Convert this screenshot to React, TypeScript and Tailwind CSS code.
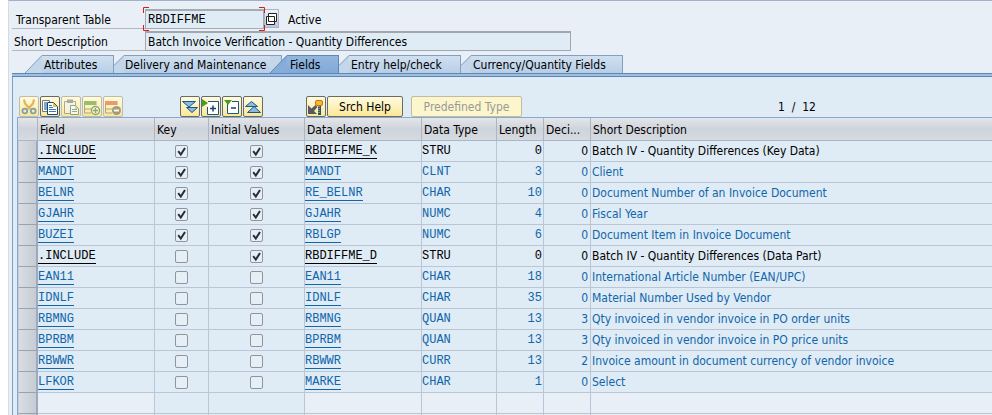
import React from "react";

type Row = { field: string; key: boolean; init: boolean; elem: string; type: string; len: number; dec: number; desc: string; black?: boolean };

const rows: Row[] = [
  { field: ".INCLUDE", key: true, init: true, elem: "RBDIFFME_K", type: "STRU", len: 0, dec: 0, desc: "Batch IV - Quantity Differences (Key Data)", black: true },
  { field: "MANDT", key: true, init: true, elem: "MANDT", type: "CLNT", len: 3, dec: 0, desc: "Client" },
  { field: "BELNR", key: true, init: true, elem: "RE_BELNR", type: "CHAR", len: 10, dec: 0, desc: "Document Number of an Invoice Document" },
  { field: "GJAHR", key: true, init: true, elem: "GJAHR", type: "NUMC", len: 4, dec: 0, desc: "Fiscal Year" },
  { field: "BUZEI", key: true, init: true, elem: "RBLGP", type: "NUMC", len: 6, dec: 0, desc: "Document Item in Invoice Document" },
  { field: ".INCLUDE", key: false, init: true, elem: "RBDIFFME_D", type: "STRU", len: 0, dec: 0, desc: "Batch IV - Quantity Differences (Data Part)", black: true },
  { field: "EAN11", key: false, init: false, elem: "EAN11", type: "CHAR", len: 18, dec: 0, desc: "International Article Number (EAN/UPC)" },
  { field: "IDNLF", key: false, init: false, elem: "IDNLF", type: "CHAR", len: 35, dec: 0, desc: "Material Number Used by Vendor" },
  { field: "RBMNG", key: false, init: false, elem: "RBMNG", type: "QUAN", len: 13, dec: 3, desc: "Qty invoiced in vendor invoice in PO order units" },
  { field: "BPRBM", key: false, init: false, elem: "BPRBM", type: "QUAN", len: 13, dec: 3, desc: "Qty invoiced in vendor invoice in PO price units" },
  { field: "RBWWR", key: false, init: false, elem: "RBWWR", type: "CURR", len: 13, dec: 2, desc: "Invoice amount in document currency of vendor invoice" },
  { field: "LFKOR", key: false, init: false, elem: "MARKE", type: "CHAR", len: 1, dec: 0, desc: "Select" },
];

const mono = "font-['Liberation_Mono',monospace]";
const base = "h-[21px] border-b border-[#bac6d5] whitespace-nowrap overflow-hidden";
const cell = `${base} border-r p-0 pt-[2px] align-top leading-[17px]`;
const boxCell = `${base} border-r p-0 align-middle`;
const head =
  "h-[23px] py-0 pr-0 pl-[2px] pt-[4px] align-top border-b border-[#aab6c4] text-left font-normal whitespace-nowrap overflow-hidden bg-linear-to-b from-[#e3e6ea] via-[#cfd3db] to-[#d6dbe1]";
const selector = "h-[21px] p-0 border-l border-r-2 border-b border-l-[#c3ccd8] border-r-[#9daaba] border-b-[#97a3b2] bg-linear-to-r from-[#dadde1] to-[#c6cbd5]";
const code = "block w-fit h-[16px] border-b border-current";

const Check = ({ on, label }: { on: boolean; label: string }) => (
  <label className="mx-auto grid size-[13px]">
    <input
      type="checkbox"
      defaultChecked={on}
      aria-label={label}
      className="peer col-start-1 row-start-1 size-[13px] appearance-none rounded-[2px] border border-[#8f959c] bg-[#e6eef6]"
    />
    <svg viewBox="0 0 13 13" className="invisible col-start-1 row-start-1 size-[13px] peer-checked:visible" fill="none" stroke="#262c38" strokeWidth="2">
      <path d="M3.200 6.200l2.600 3.300L10 3" />
    </svg>
  </label>
);

const IconButton = ({ label, off, children }: { label: string; off?: boolean; children: React.ReactNode }) => (
  <button
    type="button"
    aria-label={label}
    disabled={off}
    className={`h-[21px] w-[20px] shrink-0 rounded-[2px] border bg-linear-to-b from-[#fffbe0] to-[#fbe795] ${off ? "border-[#c0bba5]" : "border-[#6b6b62]"}`}
  >
    <svg viewBox="0 0 18 18" className={`size-[18px] ${off ? "opacity-60" : ""}`} fill="none">
      {children}
    </svg>
  </button>
);

export default function App() {
  return (
    <div className="h-screen overflow-hidden bg-white pl-[8px] font-['DejaVu_Sans_Condensed','DejaVu_Sans',sans-serif] text-[12px] leading-[16px] text-black">
      <main className="border-l border-t border-l-[#d3dbe6] border-t-[#a3b1c8] bg-[#e8eff7] pl-[3px]">
        <section className="pt-[8px]">
          <div className="flex h-[20px]">
            <label htmlFor="table" className="w-[133px] shrink-0 border-b border-[#b4b8bc] pl-[4px] pt-[3px]">Transparent Table</label>
            <div className="relative">
              <input id="table" readOnly defaultValue="RBDIFFME" className={`block h-[20px] w-[119px] border border-t-2 border-[#a3abb3] bg-[#dfebf5] pl-[2px] outline-none ${mono}`} />
              <svg viewBox="0 0 123 24" className="pointer-events-none absolute -left-[2px] -top-[2px] h-[24px] w-[123px]" fill="none" stroke="#e01818">
                <path d="M.5 6V.5H6M116 .5h5.500V6M.5 18v5.500H6M116 23.500h5.500V18" />
              </svg>
            </div>
            <button type="button" aria-label="Value help" className="h-[19px] w-[15px] border border-[#a9b4c6] bg-linear-to-b from-[#f0f3f8] to-[#bcc8da]">
              <svg viewBox="0 0 13 17" className="h-[17px] w-[13px]" fill="#fff" stroke="#222">
                <path d="M3.500 3.500h8v8h-8zM1.500 6.500h8v8h-8z" />
              </svg>
            </button>
            <span className="pl-[9px] pt-[3px]">Active</span>
          </div>
          <div className="mt-[2px] flex h-[20px]">
            <label htmlFor="short" className="w-[133px] shrink-0 border-b border-[#b4b8bc] pl-[2px] pt-[3px]">Short Description</label>
            <input id="short" readOnly defaultValue="Batch Invoice Verification - Quantity Differences" className="h-[20px] w-[426px] border border-t-2 border-[#a3a7ab] bg-[#dfebf5] pl-[2px] outline-none" />
          </div>
        </section>
        <Tabs />
        <section className="border-l border-[#7f9fc2] bg-[#dfebf5] pl-[4px] pt-[19px]">
          <div className="flex h-[21px] items-start pl-[2px]">
            <div className="flex gap-[1px]">
              <IconButton label="Cut" off>
                <path d="M4 1.500l1 4 5 5.500M14 1.500l-1 4L8 11" stroke="#d08a1c" strokeWidth="2.200" />
                <circle cx="4.800" cy="13" r="2.400" stroke="#2b72ae" strokeWidth="1.800" />
                <circle cx="13.200" cy="13" r="2.400" stroke="#2b72ae" strokeWidth="1.800" />
              </IconButton>
              <IconButton label="Copy">
                <path d="M1.500 2.500h7v11h-7z" fill="#fff" stroke="#777" />
                <path d="M3 5h3M3 7h3M3 9h3M3 11h3" stroke="#0c4a88" />
                <path d="M6.500 4.500h6l4 4v8h-10z" fill="#fff" stroke="#0c4a88" />
                <path d="M12 4.500v4.500h4.500z" fill="#f8b929" />
                <path d="M8 7.500h3M8 9.500h4M8 11.500h7M8 13.500h7" stroke="#347fba" />
              </IconButton>
              <IconButton label="Paste" off>
                <path d="M2.500 3.500h11v12h-11z" fill="#f4f4f0" stroke="#777" />
                <path d="M5 1.500h6v3.500H5z" fill="#777" />
                <path d="M8.500 7.500h5l3 3v6h-8z" fill="#fff" stroke="#2b72ae" />
                <path d="M13 7.500v3.500h3.500z" fill="#f8b929" />
                <path d="M10 11.500h5M10 13.500h5" stroke="#347fba" />
              </IconButton>
              <IconButton label="Insert row" off>
                <path d="M1 3h12v4H1z" fill="#5a9a2a" />
                <path d="M1.500 7v8H8M1.500 11h8M13 3v4" stroke="#777" />
                <circle cx="12.500" cy="12.500" r="4" fill="#fff" stroke="#3f8042" strokeWidth="1.500" />
                <path d="M12.500 10v5M10 12.500h5" stroke="#3f8042" strokeWidth="1.500" />
              </IconButton>
              <IconButton label="Delete row" off>
                <path d="M1 3h12v4H1z" fill="#e06028" />
                <path d="M1.500 7v8H8M1.500 11h8M13 3v4" stroke="#777" />
                <circle cx="12.500" cy="12.500" r="4.500" fill="#666" />
                <path d="M10 12.500h5" stroke="#fff" strokeWidth="2" />
              </IconButton>
            </div>
            <div className="ml-[57px] flex gap-[1px]">
              <IconButton label="Expand all">
                <path d="M5.500 9.500h11L11 14.500z" fill="#8dbbe0" stroke="#16558e" />
                <path d="M1.500 3.500h13L8 9z" fill="#8dbbe0" stroke="#16558e" />
              </IconButton>
              <IconButton label="Expand include">
                <path d="M6 3.500h10.500v13h-11V9" fill="#fff" stroke="#16558e" />
                <path d="M0 1l6 4-6 4z" fill="#4c9a1c" />
                <path d="M8 10.500h6M11 7.500v6" stroke="#16436b" strokeWidth="1.500" />
              </IconButton>
              <IconButton label="Collapse include">
                <path d="M9 3.500h6.500v12h-11V6" fill="#fff" stroke="#16558e" />
                <path d="M1 2h8L5 7z" fill="#4c9a1c" />
                <path d="M8 10h5" stroke="#16436b" strokeWidth="1.500" />
              </IconButton>
              <IconButton label="Collapse all">
                <path d="M1.500 8.500h12L7.500 3.500z" fill="#8dbbe0" stroke="#16558e" />
                <path d="M3.500 14.500h13L10 8.500z" fill="#8dbbe0" stroke="#16558e" />
              </IconButton>
            </div>
            <div className="ml-[43px] flex gap-[1px]">
              <IconButton label="Search help key">
                <path d="M1 7v9h9l-3-3 3.500-4L8.500 7 4.500 10.500z" fill="#555a60" />
                <rect x="8.500" y="2.500" width="7" height="5" rx="1.500" fill="#f9b929" stroke="#c8701a" />
                <path d="M12.500 8v9" stroke="#24547c" strokeWidth="3" />
                <path d="M12 8v8" stroke="#fbd34c" strokeDasharray="1 1" />
              </IconButton>
              <button type="button" className="h-[21px] w-[76px] rounded-[2px] border border-[#6b6b62] bg-linear-to-b from-[#fffbe0] to-[#fbe795]">Srch Help</button>
            </div>
            <button type="button" disabled className="ml-[8px] h-[21px] w-[111px] rounded-[2px] border border-[#c0bba5] bg-[#fdf5cb] text-[#999b98]">Predefined Type</button>
            <span className="ml-[256px] whitespace-pre pt-[3px]">1  /  12</span>
          </div>
          <Grid />
        </section>
      </main>
    </div>
  );
}

const tabBody = "border-t border-[#829fbf] text-left whitespace-nowrap h-[18px] leading-[18px] bg-linear-to-b from-[#d0e0f0] to-[#b8cee6]";

/* Short slanted edge between two inactive tabs. */
const Notch = () => (
  <svg viewBox="0 0 10 18" className="h-[18px] w-[10px]">
    <path d="M0 10L10 0v18H0z" fill="#c3d6ea" />
    <path d="M0 10.500L10 .5" stroke="#829fbf" />
  </svg>
);

function Tabs() {
  return (
    <nav role="tablist" className="mt-[4px]">
      <div className="flex h-[18px] pl-[13px]">
        <button type="button" role="tab" aria-selected="false" className="flex">
          <svg viewBox="0 0 17 18" className="h-[18px] w-[17px]">
            <path d="M0 18L17 0v18z" fill="#c3d6ea" />
            <path d="M0 18L17 .5" stroke="#829fbf" />
          </svg>
          <span className={`${tabBody} w-[72px] border-r pl-[2px]`}>Attributes</span>
        </button>
        <button type="button" role="tab" aria-selected="false" className="flex">
          <Notch />
          <span className={`${tabBody} w-[146px] pl-[1px]`}>Delivery and Maintenance</span>
        </button>
        <button type="button" role="tab" aria-selected="true" className="flex">
          <svg viewBox="0 0 17 18" className="h-[18px] w-[17px]">
            <path d="M0 0h12v6L0 18z" fill="#c3d6ea" />
            <path d="M0 .5h11.500V6" fill="none" stroke="#829fbf" />
            <path d="M0 18L17 0v18z" fill="#86add9" />
            <path d="M0 18L17 .5" stroke="#6188b4" />
          </svg>
          <span className="h-[18px] w-[52px] border-r border-t border-[#6188b4] bg-linear-to-b from-[#92b6de] to-[#82aad7] pl-[3px] text-left leading-[18px]">Fields</span>
        </button>
        <button type="button" role="tab" aria-selected="false" className="flex">
          <Notch />
          <span className={`${tabBody} w-[112px] border-r pl-[2px]`}>Entry help/check</span>
        </button>
        <button type="button" role="tab" aria-selected="false" className="flex">
          <Notch />
          <span className={`${tabBody} w-[152px] border-r pl-[2px]`}>Currency/Quantity Fields</span>
        </button>
      </div>
      <div className="h-[4px] border-y border-[#5f87b2] bg-[#9dbfe3]" />
    </nav>
  );
}

const blank = [
  ["bg-[#e8eff7]", "f"],
  ["bg-[#dfebf5]", "k"],
  ["bg-[#dfebf5]", "i"],
  ["bg-[#e8eff7]", "e"],
  ["bg-[#e8eff7]", "t"],
  ["bg-[#e8eff7]", "l"],
  ["bg-[#e8eff7]", "d"],
];

function Grid() {
  return (
    <table className="w-full table-fixed border-separate border-spacing-0 border-l border-t border-[#8ba8c8]">
      <colgroup>
        <col className="w-[20px]" />
        <col className="w-[117px]" />
        <col className="w-[54px]" />
        <col className="w-[96px]" />
        <col className="w-[117px]" />
        <col className="w-[75px]" />
        <col className="w-[47px]" />
        <col className="w-[47px]" />
        <col />
      </colgroup>
      <thead>
        <tr>
          <th className={`${head} border-r`} aria-label="Row" />
          {["Field", "Key", "Initial Values", "Data element", "Data Type", "Length", "Deci..."].map((h) => (
            <th key={h} className={`${head} border-r`}>{h}</th>
          ))}
          <th className={head}>Short Description</th>
        </tr>
      </thead>
      <tbody>
        {rows.map((r, i) => (
          <tr key={i} className={r.black ? "text-black" : "text-[#0f66ab]"}>
            <td className={selector} />
            <td className={`${cell} ${mono}`}><a href="#field" className={code}>{r.field}</a></td>
            <td className={boxCell}><Check on={r.key} label={`Key ${r.field}`} /></td>
            <td className={boxCell}><Check on={r.init} label={`Initial value ${r.field}`} /></td>
            <td className={`${cell} ${mono}`}><a href="#element" className={code}>{r.elem}</a></td>
            <td className={`${cell} ${mono}`}>{r.type}</td>
            <td className={`${cell} ${mono} pr-[1px] text-right`}>{r.len}</td>
            <td className={`${cell} pr-[2px] text-right`}>{r.dec}</td>
            <td className={`${base} p-0 pl-[1px] pt-[2px] align-top leading-[17px]`}>{r.desc}</td>
          </tr>
        ))}
        {[0, 1].map((n) => (
          <tr key={`blank${n}`}>
            <td className={selector} />
            {blank.map(([bg, id]) => (
              <td key={id} className={`${boxCell} ${bg}`} />
            ))}
            <td className={`${base} bg-[#e8eff7] p-0`} />
          </tr>
        ))}
      </tbody>
    </table>
  );
}
